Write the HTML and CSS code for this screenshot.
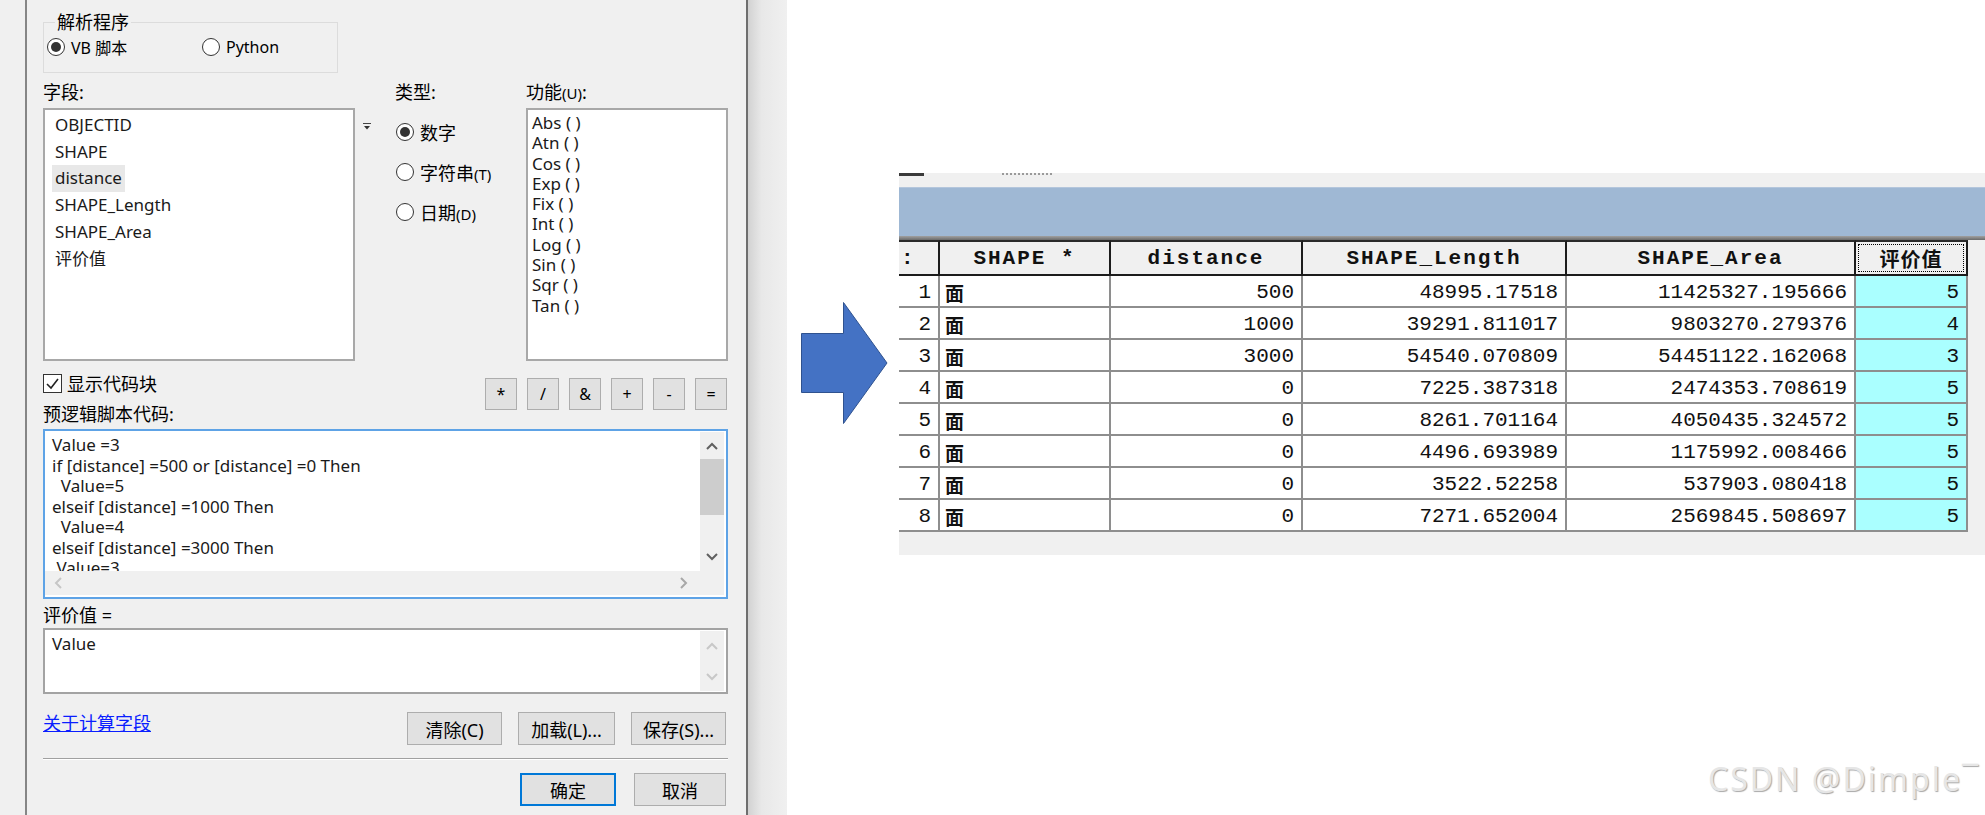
FILE: index.html
```html
<!DOCTYPE html>
<html lang="zh-CN">
<head>
    <meta charset="UTF-8">
    <title>字段计算器</title>
    <link rel="stylesheet" href="styles.css">
</head>
<body>
<div class="page">
    <!-- left: field calculator dialog -->
    <div class="dialog-shot">
        <div class="outside"></div>
        <div class="dialog">
            <fieldset class="parser">
                <legend>解析程序</legend>
                <div class="parser-row">
                    <label class="radio small vb"><span class="dot checked"></span>VB 脚本</label>
                    <label class="radio small"><span class="dot"></span>Python</label>
                </div>
            </fieldset>

            <div class="lists">
                <div class="col">
                    <div class="label">字段:</div>
                    <ul class="listbox fields">
                        <li>OBJECTID</li>
                        <li>SHAPE</li>
                        <li class="selected">distance</li>
                        <li>SHAPE_Length</li>
                        <li>SHAPE_Area</li>
                        <li>评价值</li>
                    </ul>
                </div>
                <div class="sort-arrow">
                    <svg width="8" height="7" viewBox="0 0 8 7"><path d="M0 0.5H8" stroke="#444" stroke-width="1"/><path d="M1 3H7L4 6.5Z" fill="#333"/></svg>
                </div>
                <div class="col types">
                    <div class="label">类型:</div>
                    <label class="radio type"><span class="dot checked"></span><span>数字</span></label>
                    <label class="radio type"><span class="dot"></span><span>字符串<span class="key">(T)</span></span></label>
                    <label class="radio type"><span class="dot"></span><span>日期<span class="key">(D)</span></span></label>
                </div>
                <div class="col">
                    <div class="label">功能<span class="key">(U)</span>:</div>
                    <ul class="listbox funcs">
                        <li>Abs ( )</li>
                        <li>Atn ( )</li>
                        <li>Cos ( )</li>
                        <li>Exp ( )</li>
                        <li>Fix ( )</li>
                        <li>Int ( )</li>
                        <li>Log ( )</li>
                        <li>Sin ( )</li>
                        <li>Sqr ( )</li>
                        <li>Tan ( )</li>
                    </ul>
                </div>
            </div>

            <div class="options-row">
                <div class="options-left">
                    <label class="checkbox">
                        <span class="box"><svg width="17" height="17" viewBox="0 0 17 17"><polyline points="3,9 7,13 14,4" fill="none" stroke="#222" stroke-width="1.6"/></svg></span>
                        显示代码块
                    </label>
                    <div class="label code-label">预逻辑脚本代码:</div>
                </div>
                <div class="ops">
                    <button class="op">*</button>
                    <button class="op">/</button>
                    <button class="op">&amp;</button>
                    <button class="op">+</button>
                    <button class="op">-</button>
                    <button class="op">=</button>
                </div>
            </div>

            <div class="code-box">
                <div class="code-text">Value =3
if [distance] =500 or [distance] =0 Then
  Value=5
elseif [distance] =1000 Then
  Value=4
elseif [distance] =3000 Then
 Value=3</div>
                <div class="vscroll">
                    <svg class="chev-up" width="12" height="8" viewBox="0 0 12 8"><polyline points="1,7 6,2 11,7" fill="none" stroke="#606060" stroke-width="2"/></svg>
                    <div class="thumb"></div>
                    <svg class="chev-down" width="12" height="8" viewBox="0 0 12 8"><polyline points="1,1 6,6 11,1" fill="none" stroke="#606060" stroke-width="2"/></svg>
                </div>
                <div class="hscroll">
                    <svg width="8" height="12" viewBox="0 0 8 12"><polyline points="7,1 2,6 7,11" fill="none" stroke="#c6c6c6" stroke-width="2"/></svg>
                    <svg width="8" height="12" viewBox="0 0 8 12"><polyline points="1,1 6,6 1,11" fill="none" stroke="#a8a8a8" stroke-width="2"/></svg>
                </div>
                <div class="corner"></div>
            </div>

            <div class="label expr-label">评价值 =</div>
            <div class="expr-box">
                <div class="expr-text">Value</div>
                <div class="vscroll off">
                    <svg class="chev-up" width="12" height="8" viewBox="0 0 12 8"><polyline points="1,7 6,2 11,7" fill="none" stroke="#c8c8c8" stroke-width="2"/></svg>
                    <svg class="chev-down" width="12" height="8" viewBox="0 0 12 8"><polyline points="1,1 6,6 11,1" fill="none" stroke="#c8c8c8" stroke-width="2"/></svg>
                </div>
            </div>

            <div class="action-row">
                <a class="help-link" href="#">关于计算字段</a>
                <div class="btns">
                    <button class="btn clear">清除(C)</button>
                    <button class="btn load">加载(L)...</button>
                    <button class="btn save">保存(S)...</button>
                </div>
            </div>
            <div class="separator"></div>
            <div class="final-row">
                <button class="btn ok">确定</button>
                <button class="btn cancel">取消</button>
            </div>
        </div>
        <div class="shadow"></div>
    </div>

    <!-- right: arrow and attribute table -->
    <div class="right">
        <svg class="arrow" width="87" height="122" viewBox="0 0 87 122"><path d="M0.5 31.5H42.5V0.5L86 61L42.5 121.5V90.5H0.5Z" fill="#4472c4" stroke="#2f528f"/></svg>

        <div class="table-shot">
            <div class="toolbar"><span class="tb-icon"></span><span class="tb-bits"></span></div>
            <div class="band"></div>
            <div class="band-edge"></div>
            <div class="grid-area">
                <div class="grid">
                    <div class="row head">
                        <div class="cell num">:</div>
                        <div class="cell">SHAPE *</div>
                        <div class="cell">distance</div>
                        <div class="cell">SHAPE_Length</div>
                        <div class="cell">SHAPE_Area</div>
                        <div class="cell score"><span class="focus">评价值</span></div>
                    </div>
                    <div class="row"><div class="cell num">1</div><div class="cell shape">面</div><div class="cell">500</div><div class="cell">48995.17518</div><div class="cell">11425327.195666</div><div class="cell score">5</div></div>
                    <div class="row"><div class="cell num">2</div><div class="cell shape">面</div><div class="cell">1000</div><div class="cell">39291.811017</div><div class="cell">9803270.279376</div><div class="cell score">4</div></div>
                    <div class="row"><div class="cell num">3</div><div class="cell shape">面</div><div class="cell">3000</div><div class="cell">54540.070809</div><div class="cell">54451122.162068</div><div class="cell score">3</div></div>
                    <div class="row"><div class="cell num">4</div><div class="cell shape">面</div><div class="cell">0</div><div class="cell">7225.387318</div><div class="cell">2474353.708619</div><div class="cell score">5</div></div>
                    <div class="row"><div class="cell num">5</div><div class="cell shape">面</div><div class="cell">0</div><div class="cell">8261.701164</div><div class="cell">4050435.324572</div><div class="cell score">5</div></div>
                    <div class="row"><div class="cell num">6</div><div class="cell shape">面</div><div class="cell">0</div><div class="cell">4496.693989</div><div class="cell">1175992.008466</div><div class="cell score">5</div></div>
                    <div class="row"><div class="cell num">7</div><div class="cell shape">面</div><div class="cell">0</div><div class="cell">3522.52258</div><div class="cell">537903.080418</div><div class="cell score">5</div></div>
                    <div class="row"><div class="cell num">8</div><div class="cell shape">面</div><div class="cell">0</div><div class="cell">7271.652004</div><div class="cell">2569845.508697</div><div class="cell score">5</div></div>
                </div>
            </div>
        </div>
    </div>

    <div class="watermark">CSDN @Dimple¯</div>
</div>
</body>
</html>
```

FILE: styles.css
```css
/* Reset default styles */
* {
    box-sizing: border-box;
}

body {
    margin: 0;
    background: #fff;
    font-family: "Noto Sans", "Noto Sans CJK SC", sans-serif;
    color: #000;
}

ul {
    list-style: none;
    margin: 0;
}

button {
    font-family: inherit;
    color: #000;
    padding: 0;
}

.page {
    display: flex;
    width: 1985px;
    height: 815px;
    overflow: hidden;
    position: relative;
}

/* ---------- dialog ---------- */
.dialog-shot {
    display: flex;
    flex-shrink: 0;
    width: 787px;
    height: 815px;
    background: #f0f0f0;
}

.outside {
    width: 25px;
}

.dialog {
    width: 723px;
    border-left: 2px solid #868686;
    border-right: 2px solid #6e6e6e;
    padding: 0 18px 0 16px;
}

.shadow {
    width: 39px;
    background: linear-gradient(to right, #d2d2d2, #e8e8e8 35%, #f0f0f0);
}

.parser {
    margin: 10px 0 0;
    width: 295px;
    border: 1px solid #dcdcdc;
    padding: 3px 0 15px 3px;
}

.parser legend {
    font-size: 18px;
    line-height: 24px;
    padding: 0 2px;
    margin-left: 8px;
}

.parser-row {
    display: flex;
    align-items: center;
    height: 20px;
}

.radio {
    display: flex;
    align-items: center;
    gap: 6px;
    font-size: 18px;
}

.radio.small {
    font-size: 16px;
}

.radio.vb {
    width: 155px;
}

.dot {
    position: relative;
    width: 18px;
    height: 18px;
    border: 1.5px solid #333;
    border-radius: 50%;
    background: #fff;
    flex-shrink: 0;
}

.dot.checked::after {
    content: "";
    position: absolute;
    inset: 3px;
    border-radius: 50%;
    background: #333;
}

.key {
    font-size: 15px;
}

.label {
    font-size: 18px;
    line-height: 24px;
    height: 24px;
}

.lists {
    display: grid;
    grid-template-columns: 312px 40px 131px 202px;
    margin-top: 7px;
}

.listbox {
    margin-top: 4px;
    height: 253px;
    background: #fff;
    border: 2px solid #a8a8a8;
}

.fields {
    padding: 2px 0 0 7px;
    font-size: 17px;
    line-height: 26.7px;
}

.fields li {
    width: fit-content;
    padding: 0 3px;
    color: #1a1a1a;
}

.fields li.selected {
    background: #e8e8e8;
}

.funcs {
    padding: 3px 0 0 4px;
    font-size: 17px;
    line-height: 20.3px;
    color: #1a1a1a;
}

.sort-arrow {
    margin: 33px 0 0 8px;
}

.types .radio {
    height: 40px;
    margin-left: 1px;
}

.types .radio:first-of-type {
    margin-top: 8px;
}

.options-row {
    display: flex;
    justify-content: space-between;
    align-items: flex-start;
}

.checkbox {
    display: flex;
    align-items: center;
    gap: 5px;
    margin-top: 12px;
    height: 20px;
    font-size: 18px;
}

.checkbox .box {
    width: 19px;
    height: 19px;
    border: 1px solid #333;
    background: #fff;
    display: flex;
}

.code-label {
    margin-top: 10px;
    line-height: 22px;
    height: 22px;
}

.ops {
    display: flex;
    gap: 10px;
    margin-top: 17px;
    margin-right: 1px;
}

.op {
    width: 32px;
    height: 32px;
    background: #e1e1e1;
    border: 1px solid #adadad;
    font-size: 16px;
}

.code-box {
    margin-top: 4px;
    height: 170px;
    border: 2px solid #5ea3e6;
    background: #fff;
    padding: 1px 2px 2px 0;
    display: grid;
    grid-template-columns: 1fr 24px;
    grid-template-rows: 139px 24px;
}

.code-text {
    padding: 3px 0 0 7px;
    font-size: 17px;
    line-height: 20.5px;
    white-space: pre;
    overflow: hidden;
    color: #1a1a1a;
}

.vscroll {
    background: #f0f0f0;
    display: flex;
    flex-direction: column;
    align-items: center;
}

.vscroll .chev-up {
    margin-top: 10px;
}

.vscroll .chev-down {
    margin-top: auto;
    margin-bottom: 10px;
}

.thumb {
    width: 100%;
    height: 56px;
    margin-top: 9px;
    background: #cdcdcd;
}

.hscroll {
    background: #f0f0f0;
    display: flex;
    justify-content: space-between;
    align-items: center;
    padding: 0 12px 0 9px;
}

.corner {
    background: #f0f0f0;
}

.expr-label {
    margin-top: 5px;
    line-height: 22px;
    height: 22px;
}

.expr-box {
    margin-top: 2px;
    height: 66px;
    border: 2px solid #a3a3a3;
    background: #fff;
    padding: 1px 2px 1px 0;
    display: grid;
    grid-template-columns: 1fr 24px;
}

.expr-text {
    padding: 2px 0 0 7px;
    font-size: 17px;
    line-height: 22px;
    color: #1a1a1a;
}

.vscroll.off .chev-up {
    margin-top: 11px;
}

.action-row {
    display: flex;
    justify-content: space-between;
    align-items: flex-start;
    margin-top: 18px;
    height: 33px;
}

.help-link {
    font-size: 18px;
    line-height: 22px;
    color: #0a1eff;
    text-decoration: underline;
}

.btns {
    display: flex;
    gap: 16px;
    margin-right: 2px;
}

.btn {
    height: 33px;
    background: #e1e1e1;
    border: 1px solid #adadad;
    font-size: 18px;
}

.btn.clear { width: 95px; }
.btn.load { width: 97px; }
.btn.save { width: 95px; }

.separator {
    margin-top: 13px;
    border-top: 1px solid #a0a0a0;
    border-bottom: 1px solid #fff;
}

.final-row {
    display: flex;
    justify-content: flex-end;
    gap: 18px;
    margin-top: 13px;
    margin-right: 2px;
}

.btn.ok {
    width: 96px;
    border: 2px solid #0078d7;
}

.btn.cancel {
    width: 92px;
}

/* ---------- arrow + table ---------- */
.right {
    display: flex;
    align-items: flex-start;
}

.arrow {
    margin: 302px 0 0 14px;
    flex-shrink: 0;
}

.table-shot {
    margin: 173px 0 0 11px;
    width: 1087px;
}

.toolbar {
    height: 14px;
    background: #f0f0f0;
    display: flex;
    align-items: flex-start;
}

.tb-icon {
    width: 25px;
    height: 3px;
    background: #3a3a3a;
}

.tb-bits {
    width: 50px;
    height: 3px;
    margin-left: 78px;
    border-top: 2px dotted #9a9a9a;
}

.band {
    height: 49px;
    background: #9fb8d4;
    border-top: 1px solid #b4c6dc;
}

.band-edge {
    height: 4px;
    background: linear-gradient(#a0a0a0, #6a6a6a);
}

.grid-area {
    height: 315px;
    background: #f0f0f0;
}

.row {
    display: grid;
    grid-template-columns: 41px 171px 192px 264px 289px 112px;
}

.cell {
    height: 32px;
    display: flex;
    align-items: center;
    justify-content: flex-end;
    padding: 2px 7px 0;
    background: #fff;
    border-right: 2px solid #8e8e8e;
    border-bottom: 2px solid #8e8e8e;
    font-family: "Liberation Mono", monospace;
    font-size: 21px;
    color: #111;
    white-space: nowrap;
}

.cell.shape {
    justify-content: flex-start;
    padding-left: 5px;
    font-family: "Noto Sans CJK SC", sans-serif;
    font-size: 19px;
    font-weight: 700;
}

.cell.score {
    background: #aaffff;
}

.head .cell {
    height: 36px;
    justify-content: center;
    padding: 0 4px;
    background: #f0f0f0;
    border-top: 2px solid #2a2a2a;
    border-right: 2px solid #1c1c1c;
    border-bottom: 2px solid #1c1c1c;
    font-weight: 700;
    letter-spacing: 2px;
}

.head .cell.num {
    justify-content: flex-start;
    padding-left: 2px;
}

.head .cell.score {
    padding: 2px;
}

.focus {
    flex: 1;
    height: 100%;
    display: flex;
    align-items: center;
    justify-content: center;
    border: 1px dotted #000;
    font-family: "Noto Sans CJK SC", sans-serif;
    font-size: 20px;
    letter-spacing: 1px;
}

.watermark {
    position: absolute;
    right: 5px;
    bottom: 20px;
    font-family: "Noto Sans", sans-serif;
    font-size: 32px;
    line-height: 32px;
    letter-spacing: 2px;
    color: #e6e6e6;
    text-shadow: 1px 1px 1px #a8a8a8;
}
```
